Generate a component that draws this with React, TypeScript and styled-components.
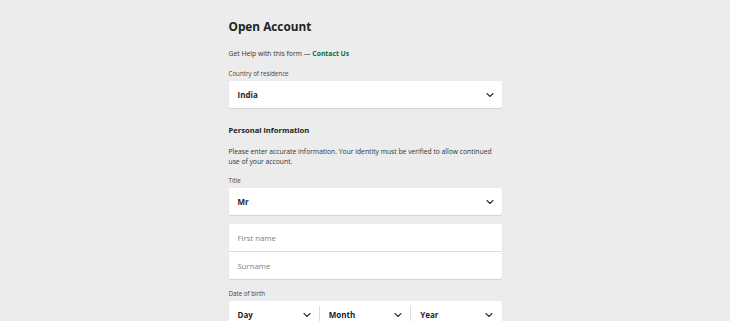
import styled, { createGlobalStyle } from "styled-components";
import { ChevronDown } from "lucide-react";

const GlobalStyle = createGlobalStyle`
    body {
        margin: 0;
        background-color: #ebeceb;
        font-family: "Open Sans", "Noto Sans", sans-serif;
        color: #1e1e1e;
    }
`;

interface SelectProps {
    value: string;
}

function Chevron() {
    return <ChevronDown size={12} strokeWidth={2.2} color="#333" />;
}

function Select(props: SelectProps) {
    return (
        <SelectBox>
            <SelectValue>{props.value}</SelectValue>
            <Chevron />
        </SelectBox>
    );
}

function App() {
    return (
        <>
            <GlobalStyle />
            <Page>
                <Title>Open Account</Title>
                <HelpText>
                    Get Help with this form — <HelpLink href="#">Contact Us</HelpLink>
                </HelpText>
                <Label>Country of residence</Label>
                <Select value="India" />

                <SectionTitle>Personal information</SectionTitle>
                <Paragraph>
                    Please enter accurate information. Your identity must be verified to allow continued use
                    of your account.
                </Paragraph>
                <Label $top={9}>Title</Label>
                <Select value="Mr" />

                <InputGroup>
                    <TextInput placeholder="First name" />
                    <TextInput placeholder="Surname" />
                </InputGroup>

                <Label>Date of birth</Label>
                <DateRow>
                    <DateSegment>
                        <SelectValue>Day</SelectValue>
                        <Chevron />
                    </DateSegment>
                    <DateDivider />
                    <DateSegment>
                        <SelectValue>Month</SelectValue>
                        <Chevron />
                    </DateSegment>
                    <DateDivider />
                    <DateSegment>
                        <SelectValue>Year</SelectValue>
                        <Chevron />
                    </DateSegment>
                </DateRow>
            </Page>
        </>
    );
}

const Page = styled.div`
    width: 273px;
    margin: 0 auto;
    padding-top: 15px;
    display: flex;
    flex-direction: column;
`;

const Title = styled.h1`
    margin: 0;
    font-size: 11.8px;
    font-weight: 700;
    line-height: 22px;
    color: #222;
`;

const HelpText = styled.p`
    margin: 12px 0 0;
    font-size: 6.8px;
    line-height: 10px;
    color: #333;
`;

const HelpLink = styled.a`
    color: #00704a;
    font-weight: 700;
    text-decoration: none;
`;

const Label = styled.div<{ $top?: number }>`
    margin-top: ${(p) => p.$top ?? 10}px;
    margin-bottom: 2px;
    font-size: 6.2px;
    line-height: 10px;
    color: #444;
`;

const SelectBox = styled.div`
    height: 27px;
    box-sizing: border-box;
    padding: 0 6px 0 9px;
    display: flex;
    align-items: center;
    justify-content: space-between;
    background: #fff;
    border-radius: 2px;
    box-shadow: 0 1px 1px rgba(0, 0, 0, 0.12);
`;

const SelectValue = styled.span`
    font-size: 8px;
    font-weight: 700;
    color: #1e1e1e;
`;

const SectionTitle = styled.h2`
    margin: 16px 0 0;
    font-size: 7.6px;
    font-weight: 700;
    line-height: 12px;
    color: #222;
`;

const Paragraph = styled.p`
    margin: 11px 0 0;
    font-size: 6.75px;
    line-height: 10px;
    color: #333;
`;

const InputGroup = styled.div`
    margin-top: 9px;
    display: flex;
    flex-direction: column;
    background: #fff;
    border-radius: 2px;
    box-shadow: 0 1px 1px rgba(0, 0, 0, 0.12);
`;

const TextInput = styled.input`
    height: 27px;
    box-sizing: border-box;
    border: none;
    outline: none;
    padding: 0 9px;
    background: transparent;
    font-family: inherit;
    font-size: 7.8px;
    color: #1e1e1e;
    & + & {
        border-top: 1px solid #dcdcdc;
        height: 28px;
    }
    &::placeholder {
        color: #808080;
    }
`;

const DateRow = styled.div`
    height: 27px;
    display: flex;
    background: #fff;
    border-radius: 2px;
    box-shadow: 0 1px 1px rgba(0, 0, 0, 0.12);
`;

const DateSegment = styled.div`
    flex: 1;
    display: flex;
    align-items: center;
    justify-content: space-between;
    padding: 0 6px 0 9px;
`;

const DateDivider = styled.div`
    width: 1px;
    margin-top: 5px;
    background: #dcdcdc;
`;

export default App;
